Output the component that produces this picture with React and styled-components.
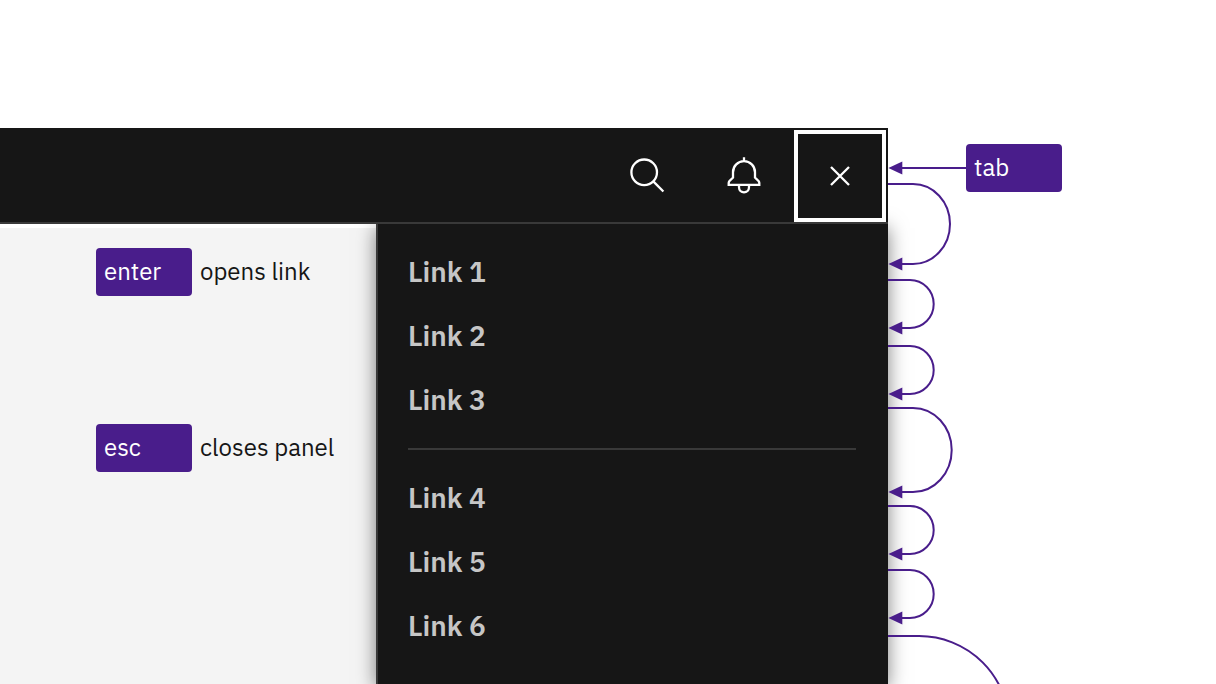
import React from "react";
import styled, { createGlobalStyle } from "styled-components";

const PURPLE = "#491d8b";
const INK = "#161616";
const LINE = "#393939";

const GlobalStyle = createGlobalStyle`
  *, *::before, *::after { box-sizing: border-box; }
  body {
    margin: 0;
    background: #ffffff;
    color: ${INK};
    font-family: "IBM Plex Sans", "Noto Sans", sans-serif;
  }
`;

const Page = styled.main`
  display: flex;
  height: 100vh;
  padding-top: 128px;
  overflow: hidden;
`;

const Shell = styled.div`
  flex: 1;
  min-width: 0;
  display: flex;
  flex-direction: column;
`;

const Header = styled.header`
  position: relative;
  z-index: 1;
  flex: none;
  display: flex;
  justify-content: flex-end;
  height: 96px;
  background: ${INK};
  border-bottom: 2px solid ${LINE};
`;

const IconButton = styled.button`
  display: flex;
  align-items: center;
  justify-content: center;
  width: ${(p) => (p.$focused ? "92px" : "96px")};
  margin: ${(p) => (p.$focused ? "2px 2px 0" : "0")};
  padding: 0;
  border: ${(p) => (p.$focused ? "4px solid #ffffff" : "0")};
  background: transparent;
  color: #ffffff;
`;

const Icon = styled.svg`
  flex: none;
  width: 40px;
  height: 40px;
  fill: none;
  stroke: currentColor;
  stroke-width: 2.3;
`;

const Body = styled.div`
  flex: 1;
  display: flex;
  min-height: 0;
`;

const Content = styled.section`
  flex: 1;
  display: flex;
  flex-direction: column;
  gap: 128px;
  padding: 20px 0 0 96px;
  border-top: 4px solid #ffffff;
  background: #f4f4f4;
`;

const Hint = styled.p`
  display: flex;
  align-items: flex-start;
  gap: 8px;
  margin: 0;
  font-size: 24px;
  line-height: 46px;
  white-space: nowrap;
`;

const Key = styled.kbd`
  display: block;
  flex: none;
  width: 96px;
  height: 48px;
  padding: 0 8px;
  border-radius: 4px;
  background: ${PURPLE};
  color: #ffffff;
  font-family: inherit;
  font-size: 24px;
  line-height: 46px;
`;

const Panel = styled.nav`
  flex: none;
  width: 512px;
  padding: 16px 32px 0 30px;
  border-left: 2px solid ${LINE};
  background: ${INK};
  box-shadow: 0 4px 18px rgba(0, 0, 0, 0.5);
`;

const LinkList = styled.ul`
  margin: 0;
  padding: 0;
  list-style: none;
`;

const PanelLink = styled.a`
  display: block;
  color: #c6c6c6;
  font-size: 28px;
  font-weight: 600;
  line-height: 64px;
  text-decoration: none;
`;

const Divider = styled.hr`
  height: 2px;
  margin: 16px 0;
  border: 0;
  background: ${LINE};
`;

const Annotations = styled.aside`
  position: relative;
  z-index: 1;
  flex: none;
  display: grid;
  width: 328px;
  align-items: start;

  > * { grid-area: 1 / 1; }
`;

const Flow = styled.svg`
  width: 328px;
  height: 600px;
  fill: none;
  stroke: ${PURPLE};
  stroke-width: 2;
`;

const TabKey = styled(Key)`
  margin: 16px 0 0 78px;
`;

const loops = [
  { from: 56, to: 136, start: 25, rx: 37 },
  { from: 152, to: 200, start: 22, rx: 23.7 },
  { from: 218, to: 266, start: 22, rx: 23.7 },
  { from: 280, to: 364, start: 25, rx: 38.7 },
  { from: 378, to: 426, start: 22, rx: 23.7 },
  { from: 442, to: 490, start: 22, rx: 23.7 },
];

const ArrowHead = ({ y }) => (
  <path d={`M0.4 ${y}L14.3 ${y - 6.5}V${y + 6.5}Z`} fill={PURPLE} stroke="none" />
);

const Links = ({ items }) => (
  <LinkList>
    {items.map((n) => (
      <li key={n}>
        <PanelLink href={`#link-${n}`}>Link {n}</PanelLink>
      </li>
    ))}
  </LinkList>
);

export default function App() {
  return (
    <>
      <GlobalStyle />
      <Page>
        <Shell>
          <Header>
            <IconButton type="button" aria-label="Search">
              <Icon viewBox="0 0 40 40" aria-hidden="true">
                <circle cx="16.2" cy="17.3" r="12.8" />
                <path d="M25.3 26.4L35.4 36.5" />
              </Icon>
            </IconButton>
            <IconButton type="button" aria-label="Notifications">
              <Icon viewBox="0 0 40 40" aria-hidden="true">
                <path d="M20 2.2V6M9 22.6V17.2A11 11 0 0 1 31 17.2V22.6L34.7 26.2Q35.3 27 35.3 28V29.8H4.7V28Q4.7 27 5.3 26.2ZM15 29.8V32.3A5 5 0 0 0 25 32.3V29.8" />
              </Icon>
            </IconButton>
            <IconButton type="button" aria-label="Close panel" $focused>
              <Icon viewBox="0 0 40 40" aria-hidden="true">
                <path d="M11 11L29 29M29 11L11 29" />
              </Icon>
            </IconButton>
          </Header>
          <Body>
            <Content>
              <Hint>
                <Key>enter</Key> opens link
              </Hint>
              <Hint>
                <Key>esc</Key> closes panel
              </Hint>
            </Content>
            <Panel aria-label="Panel links">
              <Links items={[1, 2, 3]} />
              <Divider />
              <Links items={[4, 5, 6]} />
            </Panel>
          </Body>
        </Shell>
        <Annotations>
          <Flow viewBox="0 0 328 600" aria-hidden="true">
            <path d="M12 40H78" />
            <ArrowHead y={40} />
            {loops.map(({ from, to, start, rx }) => (
              <g key={from}>
                <path
                  d={`M0 ${from}H${start}A${rx} ${(to - from) / 2} 0 0 1 ${start} ${to}H12`}
                />
                <ArrowHead y={to} />
              </g>
            ))}
            <path d="M0 508H31A90 90 0 0 1 121 598" />
          </Flow>
          <TabKey>tab</TabKey>
        </Annotations>
      </Page>
    </>
  );
}
